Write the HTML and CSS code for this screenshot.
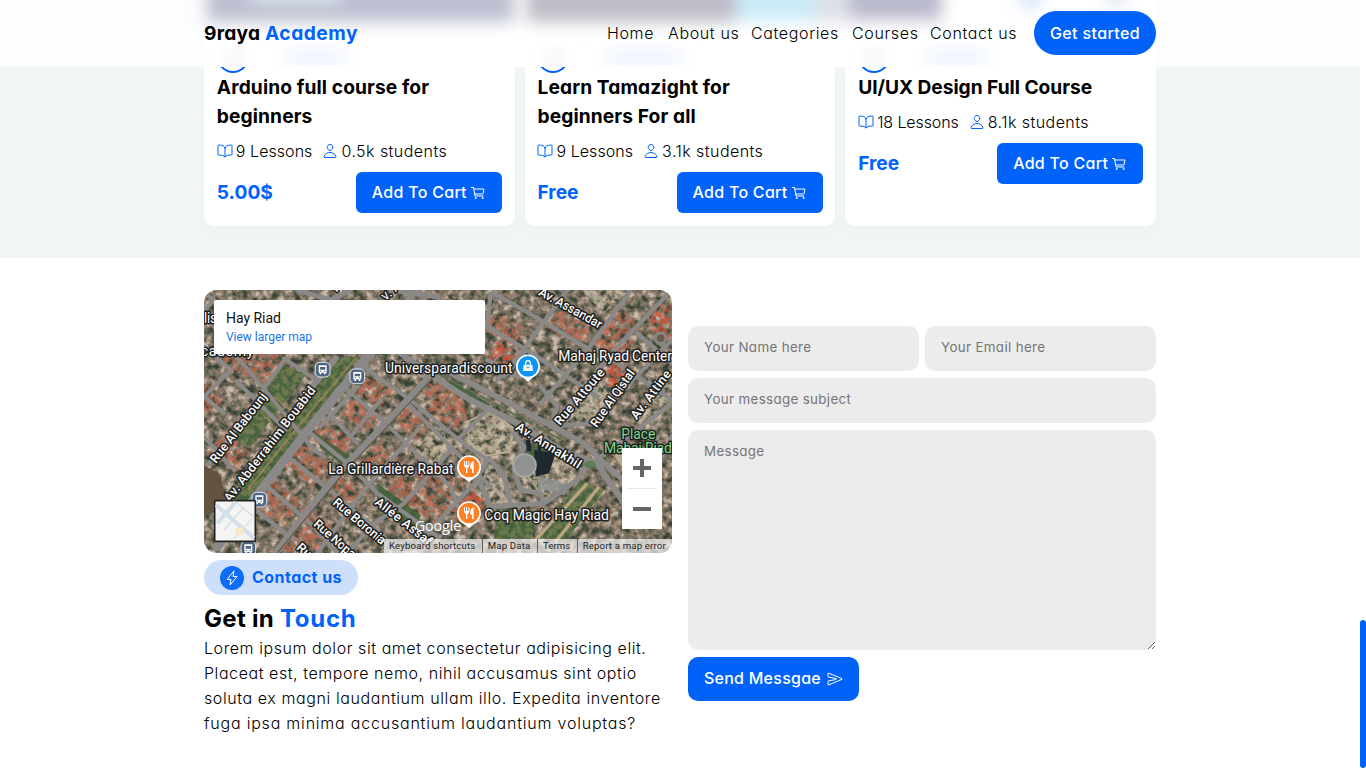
FILE: index.html
```html
<!DOCTYPE html>
<html lang="en">
<head>
<meta charset="utf-8">
<title>9raya Academy</title>
<link rel="stylesheet" href="styles.css">
</head>
<body>
<svg class="defs" width="0" height="0" aria-hidden="true">
  <symbol id="i-book" viewBox="0 0 512 512"><path d="M256 160c16-63.16 76.43-95.41 208-96a15.94 15.94 0 0116 16v288a16 16 0 01-16 16c-128 0-177.45 25.81-208 64-30.37-38-80-64-208-64-9.88 0-16-8.05-16-17.93V80a15.94 15.94 0 0116-16c131.57.59 192 32.84 208 96zM256 160v288"/></symbol>
  <symbol id="i-person" viewBox="0 0 512 512"><path d="M344 144c-3.92 52.87-44 96-88 96s-84.15-43.12-88-96c-4-55 35-96 88-96s92 42 88 96z"/><path d="M256 304c-87 0-175.3 48-191.64 138.6C62.39 453.52 68.57 464 80 464h352c11.44 0 17.62-10.48 15.65-21.4C431.3 352 343 304 256 304z"/></symbol>
  <symbol id="i-cart" viewBox="0 0 512 512"><circle cx="176" cy="416" r="16"/><circle cx="400" cy="416" r="16"/><path d="M48 80h64l48 272h256"/><path d="M160 288h249.44a8 8 0 007.85-6.43l28.8-144a8 8 0 00-7.85-9.57H128"/></symbol>
  <symbol id="i-flash" viewBox="0 0 512 512"><path d="M315.27 33L96 304h128l-31.51 173.23a2.36 2.36 0 002.33 2.77h0a2.36 2.36 0 001.89-.95L416 208H288l31.66-173.25a2.45 2.45 0 00-2.44-2.75h0a2.42 2.42 0 00-1.95 1z"/></symbol>
  <symbol id="i-send" viewBox="0 0 512 512"><path d="M470.3 271.15L43.16 447.31a7.83 7.83 0 01-11.16-7V327a8 8 0 016.51-7.86l247.62-47c17.36-3.29 17.36-28.15 0-31.44l-247.63-47a8 8 0 01-6.5-7.85V72.59c0-5.74 5.88-10.26 11.16-8L470.3 241.76a16 16 0 010 29.39z"/></symbol>
</svg>

<div class="page">
  <header class="header">
    <svg class="header-glass" width="1360" height="67" viewBox="0 0 1360 67" aria-hidden="true">
      <defs>
        <filter id="soft" x="-10%" y="-100%" width="120%" height="300%"><feGaussianBlur stdDeviation="8"/></filter>
      </defs>
      <rect width="1360" height="67" fill="#fcfdfe"/>
      <rect x="204" y="0" width="952" height="67" fill="#fff"/>
      <g filter="url(#soft)">
        <rect x="207" y="-30" width="307" height="52" fill="#bcc0d0"/>
        <rect x="250" y="-30" width="90" height="32" fill="#dfe6f0"/>
        <rect x="527" y="-30" width="209" height="52" fill="#bebcc6"/>
        <rect x="736" y="-30" width="80" height="51" fill="#caebf8"/>
        <rect x="816" y="-30" width="30" height="51" fill="#dcdfe6"/>
        <rect x="848" y="-30" width="94" height="50" fill="#bab9cd"/>
        <rect x="1020" y="-22" width="20" height="30" fill="#d5e3fb"/>
        <rect x="1108" y="-22" width="16" height="26" fill="#d5daf0"/>
        <rect x="224" y="51" width="18" height="12" fill="#ecf0f5"/>
        <rect x="285" y="52" width="60" height="11" fill="#e7eefe"/>
        <rect x="544" y="51" width="18" height="12" fill="#eef0f4"/>
        <rect x="606" y="52" width="75" height="11" fill="#e7eefe"/>
        <rect x="865" y="51" width="18" height="12" fill="#eceff2"/>
        <rect x="926" y="52" width="62" height="11" fill="#e7eefe"/>
      </g>
    </svg>
    <div class="header-inner">
      <div class="logo">9raya <span class="accent">Academy</span></div>
      <nav class="nav">
        <a>Home</a><a>About us</a><a>Categories</a><a>Courses</a><a>Contact us</a>
      </nav>
      <button class="btn-start">Get started</button>
    </div>
  </header>

  <section class="courses">
    <article class="card">
      <div class="teacher"><span class="avatar"></span></div>
      <h3>Arduino full course for<br>beginners</h3>
      <div class="meta"><span><svg class="ico"><use href="#i-book"/></svg>9 Lessons</span><span><svg class="ico"><use href="#i-person"/></svg><i>0.5k students</i></span></div>
      <div class="buy"><b>5.00$</b><button class="btn-cart">Add To Cart <svg class="ico"><use href="#i-cart"/></svg></button></div>
    </article>
    <article class="card">
      <div class="teacher"><span class="avatar"></span></div>
      <h3>Learn Tamazight for<br>beginners For all</h3>
      <div class="meta"><span><svg class="ico"><use href="#i-book"/></svg>9 Lessons</span><span><svg class="ico"><use href="#i-person"/></svg><i>3.1k students</i></span></div>
      <div class="buy"><b>Free</b><button class="btn-cart">Add To Cart <svg class="ico"><use href="#i-cart"/></svg></button></div>
    </article>
    <article class="card">
      <div class="teacher"><span class="avatar"></span></div>
      <h3 class="tight">UI/UX Design Full Course</h3>
      <div class="meta dense"><span><svg class="ico"><use href="#i-book"/></svg>18 Lessons</span><span><svg class="ico"><use href="#i-person"/></svg><i>8.1k students</i></span></div>
      <div class="buy"><b>Free</b><button class="btn-cart">Add To Cart <svg class="ico"><use href="#i-cart"/></svg></button></div>
    </article>
  </section>

  <main class="contact">
    <div class="info">
      <div class="map">
        <svg width="468" height="263" viewBox="0 0 1404 789">
          <defs>
            <filter id="city" x="0" y="0" width="100%" height="100%" color-interpolation-filters="sRGB">
              <feTurbulence type="fractalNoise" baseFrequency="0.045" numOctaves="4" seed="7"/>
              <feColorMatrix values="2 0 0 0 -.5  2 0 0 0 -.5  2 0 0 0 -.5  0 0 0 0 1"/>
              <feComponentTransfer>
                <feFuncR type="table" tableValues=".22 .31 .43 .55 .66 .78"/>
                <feFuncG type="table" tableValues=".25 .33 .42 .48 .59 .73"/>
                <feFuncB type="table" tableValues=".20 .27 .35 .42 .53 .66"/>
              </feComponentTransfer>
            </filter>
            <filter id="grain" x="0" y="0" width="100%" height="100%" color-interpolation-filters="sRGB">
              <feTurbulence type="fractalNoise" baseFrequency="0.06" numOctaves="3" seed="21" result="n"/>
              <feColorMatrix in="n" values="0 0 0 0 0  0 0 0 0 0  0 0 0 0 0  0 5 0 0 -2" result="m"/>
              <feComposite in="SourceGraphic" in2="m" operator="in"/>
            </filter>
            <g id="bus"><rect x="-22" y="-22" width="44" height="44" rx="14" fill="#4d6580" stroke="#dfe7ef" stroke-width="3"/><path d="M-12-13h24v22h-3v5h-5v-5h-8v5h-5v-5h-3z" fill="#fff"/><path d="M-8-8h16v8h-16zM-8 3h4v3h-4zM4 3h4v3h-4z" fill="#4d6580"/></g>
            <g id="food"><path d="M0 46l-14-12a36 36 0 1 1 28 0z" fill="#fff"/><circle r="31" fill="#ff8126"/><path d="M-15-17v12q0 7 6 8v15h4v-15q6-1 6-8v-12h-3v11h-4v-11h-3v11h-3v-11zM14-17q-10 2-10 13v9h5v13h5z" fill="#fff"/></g>
          </defs>
          <rect width="1404" height="789" filter="url(#city)"/>
          <g fill="#c2664d" opacity=".7" filter="url(#grain)">
            <path d="M30 190h210l-60 90-90-40zM850 60l110 50-30 60-110-60zM1070 60l100 60-40 50-110-60zM1250 60l70 60-90 110-80-50zM1340 40h64v130l-60-60zM880 150l60 40-40 60-50-40zM1240 215l60 30-60 60-60-40zM660 280l80-10 60 110-50 40-80-60zM480 260l90 40-40 50-80-40zM620 340l60 60-40 50-70-60zM530 450l90 80-50 50-100-70zM440 330l90 40-40 60-80-60zM590 550l150 100-50 50-140-100zM810 600l40 40-60 70-60-40zM290 460l90 60-50 70-90-60zM190 560l100 70-50 80-90-60zM350 390l100 60-40 50-90-50zM60 420l80 70-50 60-80-60zM0 270l60 60-60 60zM390 540l90 60-50 50-80-50zM640 500l80 60 60 0-30 80-120-80zM300 650l90 60-60 79h-100z"/>
          </g>
          <g fill="#d64f33" opacity=".6" filter="url(#grain)">
            <path d="M880 160l60 35-40 50-45-40zM1240 215l45 25-60 55-45-40zM1340 60l50 20-10 60-40-20zM810 605l35 35-55 60-40-30z"/>
          </g>
          <g fill="#d0c6ad" opacity=".65" filter="url(#grain)">
            <path d="M800 400l60-40 70 60-20 70-90 10-40-50zM620 480l80-70 60 60-80 80zM850 520l50 20 40 100-70 20-40-60zM1040 480l90 40-20 60-100 40-40-60zM1090 380l90-110 50 60-100 80zM1290 380l114-130v90l-80 90zM1130 0h150l-80 70z"/>
          </g>
          <g fill="#42613c" opacity=".88">
            <path d="M240 225l65 30-170 220-60-40zM390 205l75-5-320 440-85 10zM330 425l110 75-30 20-60-45zM520 580l130 95-20 50-110-95zM740 270l130 80-5 10-135-80zM1130 570l70 30-110 146h-90zM950 450l100 40-20 60-70-10zM880 640l120 60-20 46h-110z"/>
          </g>
          <g fill="#7f8354" opacity=".7" filter="url(#grain)"><path d="M240 225l65 30-170 220-60-40zM390 205l75-5-320 440-85 10zM1130 570l70 30-110 146h-90zM880 640l120 60-20 46h-110z"/></g>
          <path d="M1150 580l-160 175M1185 590l-130 165" fill="none" stroke="#b9a583" stroke-width="10"/>
          <path d="M455 205L340 340L290 400L130 600M210 320l60 50M180 380q40 20 20 70" fill="none" stroke="#a48a5b" stroke-width="6" opacity=".7"/>
          <path d="M0 525l50 30 20 100-70 20z" fill="#63523f"/>
          <path d="M990 480l65 10-20 60-40 10zM965 450l14 0 4 34-14 0zM1000 455l10 0 2 30-10 0z" fill="#1f2a30"/>
          <path d="M1010 560l90 25-20 30-80-20z" fill="#8f9391" opacity=".8"/>
          <path d="M790 395l65-30 75 50-15 70-85 15-35-50z" fill="none" stroke="#b8ad95" stroke-width="6"/>

          <g fill="none" stroke="#8b8988" stroke-linecap="round" stroke-linejoin="round">
            <path stroke-width="27" d="M500 190L300 435L140 640L40 770"/>
            <path stroke-width="18" d="M640 0L470 180M395 205L300 320"/>
            <path stroke-width="20" d="M690 245L545 400L430 520L320 650L215 789"/>
            <path stroke-width="18" d="M590 190L690 260L790 325L940 400L1080 485L1180 520L1240 610L1300 700"/>
            <path stroke-width="17" d="M720 240L880 320L1010 390L1140 460L1190 510L1280 590"/>
            <path stroke-width="12" d="M0 170L80 240L0 320M0 320L60 370M100 200L330 480L360 500M240 205L330 265M0 60L30 30L0 10M230 225L95 420L10 525M100 275L245 420M0 440L90 540"/>
            <path stroke-width="13" d="M320 430L430 520L520 610L700 740M265 510L400 620L540 740M190 590L330 710L400 789M130 640L270 750"/>
            <path stroke-width="12" d="M375 370L460 460M430 300L545 400L740 590L760 650M470 225L620 330L790 470L870 520M610 340L860 590M460 290L350 410M530 330L440 440M770 440L860 350M650 410L480 600L340 789M740 480L600 640L510 700L430 789M830 560L640 760"/>
            <path stroke-width="13" d="M830 100L960 175L1060 240L1180 320M870 10L1010 90L1150 175M860 10L850 100M1090 0L950 190L880 270M1280 0L1150 180L1010 340M1404 0L1250 160L1040 410L1160 400L1404 150M1180 180L1404 330M1300 130L1404 220M960 190L900 260M850 210L940 260M1010 290L1060 350L1040 410M1404 340L1190 500"/>
            <path stroke-width="15" d="M850 510L820 560L860 650L1020 640L1120 570L1150 520M860 510L900 560L920 640M930 430L960 470L930 540L950 600L1010 610L1020 640M1404 440L1340 560M280 0L380 30L440 0M560 0L700 20"/>
          </g>
          <g fill="none" stroke="#665c4b" stroke-width="4"><path d="M685 265L550 410L435 530L220 789M700 40L650 250"/></g>
          <path d="M700 250L880 345L1070 448" fill="none" stroke="#5c7052" stroke-width="6" stroke-dasharray="38 10"/>
          <circle cx="962" cy="526" r="34" fill="#8f9291" stroke="#a9aaa5" stroke-width="5"/>
          <circle cx="1370" cy="145" r="16" fill="#6f5a4c" stroke="#868684" stroke-width="9"/>
          <ellipse cx="1158" cy="524" rx="18" ry="11" fill="#5a7d53"/>
          <path d="M1225 490q30 60 60 60l-30-80z" fill="#b9a88a" stroke="#8d7457" stroke-width="4"/>

          <g class="lbl">
            <text x="0" y="100" textLength="40">lis</text>
            <text x="-10" y="198" textLength="158">cademy</text>
            <text transform="translate(398 8) rotate(-50)" font-size="36">r</text>
            <text transform="translate(545 34) rotate(-42)" font-size="36">v. A</text>
            <text x="543" y="249" textLength="383">Universparadiscount</text>
            <text x="1063" y="213" textLength="341">Mahaj Ryad Center</text>
            <text x="373" y="552" textLength="376">La Grillardière Rabat</text>
            <text x="841" y="690" textLength="374">Coq Magic Hay Riad</text>
            <text class="road" transform="translate(1001 14) rotate(29)" textLength="212">Av. Assandar</text>
            <text class="road" transform="translate(1068 408) rotate(-49.5)" textLength="210">Rue Attoute</text>
            <text class="road" transform="translate(1178 415) rotate(-55)" textLength="202">Rue Al Qistal</text>
            <text class="road" transform="translate(1298 391) rotate(-53)" textLength="174">Av. Attine</text>
            <text class="road" transform="translate(932 418) rotate(32)" textLength="224">Av. Annakhil</text>
            <text class="road" transform="translate(36 522) rotate(-52.5)" textLength="254">Rue Al Babounj</text>
            <text class="road" transform="translate(78 638) rotate(-52.5)" textLength="424">Av. Abderrahim Bouabid</text>
            <text class="road" transform="translate(510 641) rotate(38)" textLength="206">Allée Assaf</text>
            <text class="road" transform="translate(384 641) rotate(40)" textLength="194">Rue Boronia</text>
            <text class="road" transform="translate(326 706) rotate(41)" textLength="154">Rue Nopa</text>
            <text class="road" transform="translate(275 776) rotate(41)">Rue</text>
            <text class="park" x="1252" y="448" textLength="102">Place</text>
            <text class="park" x="1200" y="488" textLength="204">Mahaj Riad</text>
          </g>
          <use href="#bus" x="356" y="239"/><use href="#bus" x="460" y="259"/><use href="#bus" x="166" y="629"/><use href="#bus" x="133" y="776"/>
          <use href="#food" x="795" y="531"/><use href="#food" x="795" y="669"/>
          <g transform="translate(972 229)"><path d="M0 46l-14-12a36 36 0 1 1 28 0z" fill="#fff"/><circle r="31" fill="#0c95f5"/><path d="M-13-5h26l2 19h-30z" fill="#fff"/><path d="M-7-5v-5a7 7 0 0 1 14 0v5" fill="none" stroke="#fff" stroke-width="4"/><path d="M-5 1q5 8 10 0" fill="none" stroke="#0c95f5" stroke-width="3"/></g>
          <text class="google" x="632" y="722" textLength="140">Google</text>

          <rect x="30" y="30" width="813" height="162" rx="6" fill="#fff"/>
          <text class="place" x="66" y="99" textLength="165">Hay Riad</text>
          <text class="larger" x="66" y="152" textLength="258">View larger map</text>

          <rect x="32" y="632" width="122" height="122" rx="3" fill="#f4f4f3" stroke="#222" stroke-width="5"/>
          <g fill="none" stroke="#d3dfe8" stroke-width="12"><path d="M36 645L150 745M95 636L40 700"/><path stroke-width="4" d="M60 720l60-70M90 745l55-60M95 636l55 45"/></g>
          <circle cx="106" cy="724" r="12" fill="#fbe7c1"/>

          <rect x="1254" y="474" width="120" height="243" fill="#fff"/>
          <path d="M1287 534h54M1314 507v54M1287 657h54" stroke="#666" stroke-width="12"/>
          <path d="M1269 595.5h90" stroke="#e6e6e6" stroke-width="3"/>

          <rect x="540" y="747" width="864" height="42" fill="#f5f5f5" opacity=".7"/>
          <path d="M835.500 747v42M1000.500 747v42M1120.500 747v42" stroke="#4b4a42" stroke-width="2.500"/>
          <g class="legal">
            <text x="555" y="776" textLength="259">Keyboard shortcuts</text><text x="851" y="776" textLength="128">Map Data</text><text x="1017" y="776" textLength="82">Terms</text><text x="1136" y="776" textLength="249">Report a map error</text>
          </g>
        </svg>
      </div>
      <div class="pill"><span class="bolt"><svg class="ico"><use href="#i-flash"/></svg></span><span class="lift">Contact us</span></div>
      <h2>Get in <span class="accent">Touch</span></h2>
      <p>Lorem ipsum dolor sit amet consectetur adipisicing elit.<br>Placeat est, tempore nemo, nihil accusamus sint optio<br><span class="mid">soluta ex magni laudantium ullam illo. Expedita inventore</span><br><span class="wide">fuga ipsa minima accusantium laudantium voluptas?</span></p>
    </div>

    <form class="form">
      <input type="text" placeholder="Your Name here">
      <input type="text" placeholder="Your Email here">
      <input class="full" type="text" placeholder="Your message subject">
      <textarea class="full" placeholder="Message"></textarea>
      <button class="btn-send" type="button">Send Messgae <svg class="ico"><use href="#i-send"/></svg></button>
    </form>
  </main>
</div>
<div class="scroll-thumb"></div>
</body>
</html>
```

FILE: styles.css
```css
* { box-sizing: border-box; margin: 0; padding: 0; }

body {
  height: 768px;
  overflow: hidden;
  background: #fff;
  color: #000;
  font: 300 16px/24px Inter, "Open Sans", sans-serif;
  font-feature-settings: "cv11";
}

button, input, textarea { font-family: inherit; font-feature-settings: inherit; border: 0; outline: 0; }

.defs { position: absolute; }
.page { width: 1360px; }
.accent { color: #0162fa; }

.ico {
  width: 16px;
  height: 16px;
  fill: none;
  stroke: currentColor;
  stroke-width: 32;
  stroke-linecap: round;
  stroke-linejoin: round;
}

/* header */
.header { position: relative; height: 67px; overflow: hidden; }
.header-glass { position: absolute; left: 0; top: 0; }
.header-inner {
  position: relative;
  display: flex;
  align-items: center;
  width: 952px;
  height: 66px;
  margin: 0 auto;
}
.logo { flex: 1; font-size: 19.2px; font-weight: 700; letter-spacing: .2px; }
.logo .accent { letter-spacing: .5px; }
.nav {
  display: grid;
  grid-template-columns: 48px 70px 88px 65px 88px;
  gap: 13px;
  margin-right: 16px;
  letter-spacing: .64px;
  white-space: nowrap;
}
.btn-start {
  width: 122px;
  height: 44px;
  border-radius: 22px;
  background: #0162fa;
  color: #fff;
  font-size: 16px;
  font-weight: 500;
  letter-spacing: .37px;
}

/* courses */
.courses {
  display: grid;
  grid-template-columns: repeat(3, 1fr);
  gap: 10px;
  height: 191px;
  padding: 0 204px 32px;
  background: #f0f6f6;
}
.card {
  padding: 0 12.8px;
  border-radius: 0 0 10px 10px;
  background: #fff;
  box-shadow: 0 6px 14px rgba(0, 0, 0, .02);
}
.teacher { display: flex; align-items: flex-end; height: 6px; overflow: hidden; }
.avatar { flex: none; width: 32px; height: 32px; border: 2px solid #0162fa; border-radius: 50%; }
.card h3 { font-size: 19.2px; line-height: 29px; font-weight: 700; letter-spacing: .1px; }
.card h3.tight { letter-spacing: -.04px; }
.meta { display: flex; gap: 10px; padding: 8px 0 9px; height: 41px; letter-spacing: .06px; }
.meta span { display: flex; align-items: center; gap: 3px; }
.meta i { font-style: normal; letter-spacing: .45px; }
.meta.dense { letter-spacing: -.1px; }
.meta .ico { color: #0162fa; }
.buy { display: flex; align-items: center; justify-content: space-between; }
.buy b { padding-bottom: 2px; font-size: 19.2px; font-weight: 700; color: #0162fa; }
.btn-cart {
  display: flex;
  align-items: center;
  justify-content: center;
  gap: 3px;
  width: 146px;
  height: 41px;
  padding-bottom: 2px;
  border-radius: 6px;
  background: #0162fa;
  color: #fff;
  font-size: 16px;
  font-weight: 500;
  letter-spacing: .28px;
}
.btn-cart .ico { margin-top: 2px; }

/* contact */
.contact {
  display: grid;
  grid-template-columns: 468px 468px;
  gap: 16px;
  align-items: center;
  padding: 32px 204px 0;
}
.map { height: 263px; border-radius: 13px; overflow: hidden; }
.map svg { display: block; }
.map text { font-family: Roboto, sans-serif; font-feature-settings: normal; }
.lbl text {
  font-size: 42px;
  font-weight: 400;
  fill: #fff;
  stroke: #202020;
  stroke-width: 9px;
  stroke-linejoin: round;
  paint-order: stroke;
}
.lbl .road { font-size: 38px; font-weight: 500; }
.lbl .park { fill: #7bd88a; }
.map .google { font-family: "Open Sans", sans-serif; font-size: 43px; font-weight: 500; fill: #fff; }
.place { font-size: 42px; font-weight: 400; fill: #111; }
.larger { font-size: 36px; font-weight: 400; fill: #1a73e8; }
.legal text { font-size: 29px; font-weight: 400; fill: #222; }

.pill {
  display: flex;
  align-items: center;
  gap: 8px;
  width: 154px;
  height: 35px;
  margin-top: 7px;
  padding-left: 16px;
  border-radius: 18px;
  background: #cddffa;
  color: #0162fa;
  font-weight: 700;
  letter-spacing: .46px;
  white-space: nowrap;
}
.lift { padding-bottom: 2px; }
.bolt { display: grid; place-items: center; width: 24px; height: 24px; border-radius: 50%; background: #0f6bfa; color: #fff; }
.info h2 { padding-top: 6px; font-size: 24px; line-height: 35px; font-weight: 700; letter-spacing: .3px; }
.info h2 .accent { letter-spacing: .7px; }
.info p { line-height: 25px; letter-spacing: .57px; white-space: nowrap; }
.info .mid { letter-spacing: .59px; }
.info .wide { letter-spacing: .79px; }

.form { display: grid; grid-template-columns: 1fr 1fr; gap: 7px 6px; }
.full { grid-column: 1 / -1; }
.form input, .form textarea {
  width: 100%;
  height: 45px;
  padding: 0 16px 2px;
  border-radius: 10px;
  background: #ececec;
  font-size: 13.333px;
  font-weight: 400;
  letter-spacing: .36px;
}
.form textarea { display: block; height: 220px; padding-top: 11px; line-height: 20px; }
.form ::placeholder { color: #757575; }
.btn-send {
  display: flex;
  align-items: center;
  gap: 6px;
  width: 171px;
  height: 44px;
  padding: 0 0 2px 16px;
  border-radius: 10px;
  background: #0162fa;
  color: #fff;
  font-size: 16px;
  font-weight: 500;
  letter-spacing: .25px;
  white-space: nowrap;
}
.btn-send .ico { margin-top: 2px; }

/* page scrollbar */
.scroll-thumb {
  position: fixed;
  right: 0;
  bottom: 0;
  width: 6px;
  height: 148px;
  border-radius: 3px;
  background: #0162fa;
}
```
